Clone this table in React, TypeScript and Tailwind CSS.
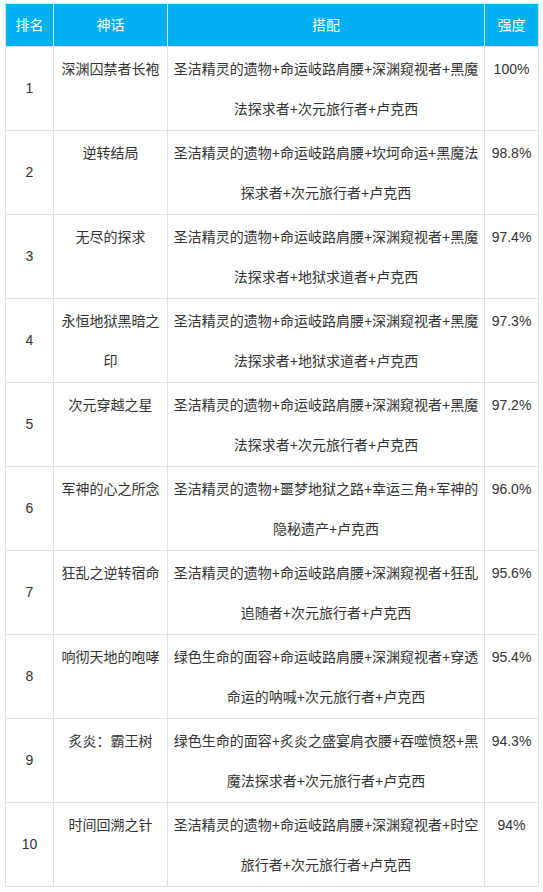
const rows: { rank: number; name: string[]; combo: string[]; score: string }[] = [
  {
    rank: 1,
    name: ["深渊囚禁者长袍"],
    combo: ["圣洁精灵的遗物+命运岐路肩腰+深渊窥视者+黑魔", "法探求者+次元旅行者+卢克西"],
    score: "100%",
  },
  {
    rank: 2,
    name: ["逆转结局"],
    combo: ["圣洁精灵的遗物+命运岐路肩腰+坎坷命运+黑魔法", "探求者+次元旅行者+卢克西"],
    score: "98.8%",
  },
  {
    rank: 3,
    name: ["无尽的探求"],
    combo: ["圣洁精灵的遗物+命运岐路肩腰+深渊窥视者+黑魔", "法探求者+地狱求道者+卢克西"],
    score: "97.4%",
  },
  {
    rank: 4,
    name: ["永恒地狱黑暗之", "印"],
    combo: ["圣洁精灵的遗物+命运岐路肩腰+深渊窥视者+黑魔", "法探求者+地狱求道者+卢克西"],
    score: "97.3%",
  },
  {
    rank: 5,
    name: ["次元穿越之星"],
    combo: ["圣洁精灵的遗物+命运岐路肩腰+深渊窥视者+黑魔", "法探求者+次元旅行者+卢克西"],
    score: "97.2%",
  },
  {
    rank: 6,
    name: ["军神的心之所念"],
    combo: ["圣洁精灵的遗物+噩梦地狱之路+幸运三角+军神的", "隐秘遗产+卢克西"],
    score: "96.0%",
  },
  {
    rank: 7,
    name: ["狂乱之逆转宿命"],
    combo: ["圣洁精灵的遗物+命运岐路肩腰+深渊窥视者+狂乱", "追随者+次元旅行者+卢克西"],
    score: "95.6%",
  },
  {
    rank: 8,
    name: ["响彻天地的咆哮"],
    combo: ["绿色生命的面容+命运岐路肩腰+深渊窥视者+穿透", "命运的呐喊+次元旅行者+卢克西"],
    score: "95.4%",
  },
  {
    rank: 9,
    name: ["炙炎：霸王树"],
    combo: ["绿色生命的面容+炙炎之盛宴肩衣腰+吞噬愤怒+黑", "魔法探求者+次元旅行者+卢克西"],
    score: "94.3%",
  },
  {
    rank: 10,
    name: ["时间回溯之针"],
    combo: ["圣洁精灵的遗物+命运岐路肩腰+深渊窥视者+时空", "旅行者+次元旅行者+卢克西"],
    score: "94%",
  },
];

function Lines({ lines }: { lines: string[] }) {
  return (
    <>
      {lines.map((l, i) => (
        <div key={i} className="whitespace-nowrap">
          {l}
        </div>
      ))}
    </>
  );
}

export default function App() {
  return (
    <div className="min-h-[892px] bg-white pl-[5px] pt-[3px] font-['Liberation_Sans','Noto_Sans_CJK_SC',sans-serif] text-[14px] text-[#333333]">
      <table className="w-[533px] table-fixed border-collapse">
        <colgroup>
          <col className="w-[48px]" />
          <col className="w-[114px]" />
          <col className="w-[317px]" />
          <col className="w-[54px]" />
        </colgroup>
        <thead>
          <tr className="h-[43px] bg-[#00b0f0] text-white">
            <th className="border border-[#dae3f0] font-normal">排名</th>
            <th className="border border-[#dae3f0] font-normal">神话</th>
            <th className="border border-[#dae3f0] font-normal">搭配</th>
            <th className="border border-[#dae3f0] font-normal">强度</th>
          </tr>
        </thead>
        <tbody>
          {rows.map((r) => (
            <tr key={r.rank} className="h-[84px]">
              <td className="border border-[#dae3f0] p-0 text-center align-middle">{r.rank}</td>
              <td className="border border-[#dae3f0] px-1 pt-[2px] pb-0 text-center align-top leading-[40px]">
                <Lines lines={r.name} />
              </td>
              <td className="border border-[#dae3f0] px-1 pt-[2px] pb-0 text-center align-top leading-[40px]">
                <Lines lines={r.combo} />
              </td>
              <td className="border border-[#dae3f0] px-0 pt-[2px] pb-0 text-center align-top leading-[40px]">
                {r.score}
              </td>
            </tr>
          ))}
        </tbody>
      </table>
    </div>
  );
}
